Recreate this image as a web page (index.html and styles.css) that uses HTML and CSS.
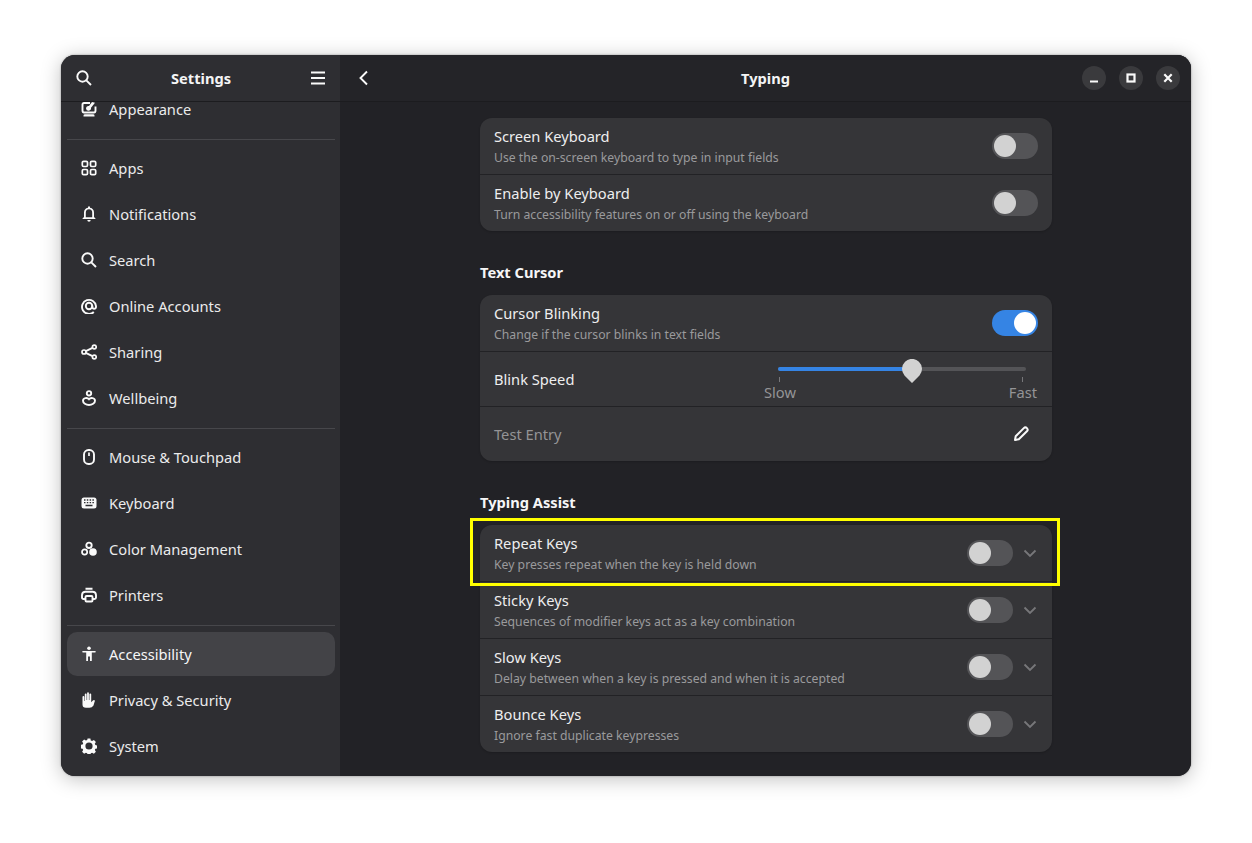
FILE: index.html
```html
<!DOCTYPE html>
<html lang="en">
<head>
<meta charset="utf-8">
<title>Settings - Typing</title>
<link rel="stylesheet" href="styles.css">
</head>
<body>
<div class="window">
  <aside class="sidebar">
    <header class="bar side-bar">
      <svg class="icon" viewBox="0 0 16 16"><circle class="st" cx="6.500" cy="6.500" r="5.200"/><path class="st" d="M10.300 10.300 15 15"/></svg>
      <span class="bar-title">Settings</span>
      <svg class="icon" viewBox="0 0 16 16"><path class="st" d="M1 2.500h14M1 8h14M1 13.500h14"/></svg>
    </header>
    <nav class="nav">
      <div class="nav-inner">
        <a class="item"><svg class="icon" viewBox="0 0 16 16"><path class="st" d="M9 2H3Q1.500 2 1.500 3.500v6Q1.500 11.500 3 11.500h10q1.500 0 1.500-2V5.500"/><path class="fl" d="M5 7.500a2.500 2.500 0 0 1 3-2.500l3-4 3 .8-4 5a2.500 2.500 0 0 1-5 .7zM4 13.300h8q1.500 0 1.500 1.200v1h-11v-1q0-1.200 1.500-1.200z"/></svg><span>Appearance</span></a>
        <hr class="sep">
        <a class="item"><svg class="icon" viewBox="0 0 16 16"><g class="st th"><rect x="1.300" y="1.300" width="5.200" height="5.200" rx="1.300"/><rect x="9.500" y="1.300" width="5.200" height="5.200" rx="1.300"/><rect x="1.300" y="9.500" width="5.200" height="5.200" rx="1.300"/><rect x="9.500" y="9.500" width="5.200" height="5.200" rx="1.300"/></g></svg><span>Apps</span></a>
        <a class="item"><svg class="icon" viewBox="0 0 16 16"><path class="fl" fill-rule="evenodd" d="M7 .5h2v1.300A5 5 0 0 1 13 6.700V11l1.500 1.500V13h-13v-.5L3 11V6.700A5 5 0 0 1 7 1.800zM8 3.300A3.300 3.300 0 0 0 4.800 6.700V11.300h6.400V6.700A3.300 3.300 0 0 0 8 3.300zM6.300 14h3.400a1.700 1.700 0 0 1-3.400 0z"/></svg><span>Notifications</span></a>
        <a class="item"><svg class="icon" viewBox="0 0 16 16"><circle class="st" cx="6.500" cy="6.500" r="5.200"/><path class="st" d="M10.300 10.300 15 15"/></svg><span>Search</span></a>
        <a class="item"><svg class="icon" viewBox="0 0 16 16"><path class="st" d="M12.800 14A7 7 0 1 1 15 8.200v.8a1.800 1.800 0 0 1-3.600 0V7.800"/><circle class="st" cx="8" cy="8" r="3.200"/></svg><span>Online Accounts</span></a>
        <a class="item"><svg class="icon" viewBox="0 0 16 16"><circle class="st th" cx="3" cy="8" r="2"/><circle class="st th" cx="13.300" cy="3" r="1.900"/><circle class="st th" cx="13.300" cy="13" r="1.900"/><path class="st" d="M4.800 7.100 11.500 3.900M4.800 8.900l6.700 3.200"/></svg><span>Sharing</span></a>
        <a class="item"><svg class="icon" viewBox="0 0 16 16"><circle class="st" cx="8" cy="3.300" r="2.200"/><path class="st" d="M8 9.200C6.500 7.400 2 7.500 2 10.700 2 13.300 5 15 8 15s6-1.700 6-4.300c0-3.200-4.500-3.300-6-1.500z"/></svg><span>Wellbeing</span></a>
        <hr class="sep">
        <a class="item"><svg class="icon" viewBox="0 0 16 16"><rect class="st" x="3" y="1" width="10" height="14" rx="4.500"/><path class="st th" d="M8 3.500v3.500"/></svg><span>Mouse &amp; Touchpad</span></a>
        <a class="item"><svg class="icon" viewBox="0 0 16 16"><rect class="fl" x="0.500" y="2.500" width="15" height="11" rx="2.500"/><path class="dk" d="M3 5h1.500M5.800 5h1.500M8.600 5h1.500M11.400 5h1.500M3 7.700h1.500M5.800 7.700h1.500M8.600 7.700h1.500M11.400 7.700h1.500M4.500 10.500h7"/></svg><span>Keyboard</span></a>
        <a class="item"><svg class="icon" viewBox="0 0 16 16"><circle class="st" cx="8" cy="4.300" r="2.700"/><circle class="st th" cx="3.600" cy="11" r="2.600"/><circle class="fl" cx="12" cy="11" r="3.800"/></svg><span>Color Management</span></a>
        <a class="item"><svg class="icon" viewBox="0 0 16 16"><path class="st" d="M4.500 4.800h7a3.500 3.500 0 0 1 3.500 3.200v2.500q0 1.500-1.500 1.500H12M4 12H2.500Q1 12 1 10.500V8a3.500 3.500 0 0 1 3.500-3.200"/><rect class="st" x="4.500" y="9" width="7" height="5.500" rx="1"/><path class="st" d="M4.500 1.800h7"/></svg><span>Printers</span></a>
        <hr class="sep">
        <a class="item active"><svg class="icon" viewBox="0 0 16 16"><circle class="fl" cx="8" cy="2.200" r="1.800"/><path class="fl" d="M2 5h12q.8 0 .8.800t-.8.800h-3.200V15H9V10.500H7V15H5.200V6.600H2q-.8 0-.8-.8T2 5z"/></svg><span>Accessibility</span></a>
        <a class="item"><svg class="icon" viewBox="0 0 16 16"><path class="fl" d="M1.500 5q0-.9.900-.9t.9.900v4h.5V2.300q0-.9.900-.9t.9.900V8h.5V1.200q0-.9.900-.9t.9.900V8h.5V2.300q0-.9.900-.9t.9.900V10.300l1.700-1.900q.9-.8 1.700-.2.700.6 0 1.500L12.500 13.500Q11 15.700 8.500 15.700H5Q1.500 15.700 1.500 12.500z"/></svg><span>Privacy &amp; Security</span></a>
        <a class="item"><svg class="icon" viewBox="0 0 16 16"><path class="fl" fill-rule="evenodd" d="M6.600.5h2.800l.4 2 1.300.6 1.800-1.100 2 2-1.100 1.800.6 1.300 2.100.4v2.800l-2.100.4-.6 1.300 1.100 1.800-2 2-1.800-1.100-1.300.6-.4 2.100H6.600l-.4-2.100-1.300-.6-1.800 1.100-2-2 1.100-1.800-.6-1.300-2.100-.4V6.900l2.100-.4.600-1.300L1.100 3.400l2-2 1.800 1.100 1.300-.6zM8 4.400a3.600 3.600 0 1 0 0 7.200A3.600 3.600 0 0 0 8 4.400z"/></svg><span>System</span></a>
      </div>
    </nav>
  </aside>
  <main class="main">
    <header class="bar main-bar">
      <div class="bar-start"><svg class="icon" viewBox="0 0 16 16"><path class="st" d="M11 1.500 4.500 8l6.500 6.500"/></svg></div>
      <span class="bar-title">Typing</span>
      <div class="bar-end">
        <span class="wbtn"><svg class="wicon" viewBox="0 0 10 10"><path class="st" d="M1 8.500h8"/></svg></span>
        <span class="wbtn"><svg class="wicon" viewBox="0 0 10 10"><rect class="st" x="1.500" y="1.500" width="7" height="7"/></svg></span>
        <span class="wbtn"><svg class="wicon" viewBox="0 0 10 10"><path class="st" d="m1.300 1.300 7.400 7.400M8.700 1.300 1.300 8.700"/></svg></span>
      </div>
    </header>
    <div class="content">
      <section class="card">
        <div class="row"><div class="text"><div class="title">Screen Keyboard</div><div class="sub">Use the on-screen keyboard to type in input fields</div></div><span class="switch"></span></div>
        <div class="row"><div class="text"><div class="title">Enable by Keyboard</div><div class="sub">Turn accessibility features on or off using the keyboard</div></div><span class="switch"></span></div>
      </section>
      <h2 class="heading">Text Cursor</h2>
      <section class="card">
        <div class="row"><div class="text"><div class="title">Cursor Blinking</div><div class="sub">Change if the cursor blinks in text fields</div></div><span class="switch on"></span></div>
        <div class="row scale-row"><div class="title">Blink Speed</div>
          <div class="scale">
            <div class="trough"><div class="fill"></div><span class="handle"><svg viewBox="0 0 20 24"><path d="M10 24 2.500 16.500A10 10 0 1 1 17.500 16.500z"/></svg></span></div>
            <div class="marks">
              <div class="mark"><i></i><span>Slow</span></div>
              <div class="mark"><i></i><span>Fast</span></div>
            </div>
          </div>
        </div>
        <div class="row entry-row"><div class="entry-label">Test Entry</div><svg class="icon" viewBox="0 0 16 16"><path class="st th2" d="M2 14l.7-3.800L10.800 2.100a2 2 0 0 1 3.100 3.100L5.800 13.300z"/></svg></div>
      </section>
      <h2 class="heading">Typing Assist</h2>
      <section class="card">
        <div class="row highlight"><div class="text"><div class="title">Repeat Keys</div><div class="sub">Key presses repeat when the key is held down</div></div><span class="switch"></span><svg class="chev" viewBox="0 0 16 16"><path d="M2.500 5.500 8 11l5.500-5.500"/></svg></div>
        <div class="row"><div class="text"><div class="title">Sticky Keys</div><div class="sub">Sequences of modifier keys act as a key combination</div></div><span class="switch"></span><svg class="chev" viewBox="0 0 16 16"><path d="M2.500 5.500 8 11l5.500-5.500"/></svg></div>
        <div class="row"><div class="text"><div class="title">Slow Keys</div><div class="sub">Delay between when a key is pressed and when it is accepted</div></div><span class="switch"></span><svg class="chev" viewBox="0 0 16 16"><path d="M2.500 5.500 8 11l5.500-5.500"/></svg></div>
        <div class="row"><div class="text"><div class="title">Bounce Keys</div><div class="sub">Ignore fast duplicate keypresses</div></div><span class="switch"></span><svg class="chev" viewBox="0 0 16 16"><path d="M2.500 5.500 8 11l5.500-5.500"/></svg></div>
      </section>
    </div>
  </main>
</div>
</body>
</html>
```
FILE: styles.css
```css
* { box-sizing: border-box; }
html, body { margin: 0; height: 100%; overflow: hidden; }
body {
  background: #fff;
  padding: 55px 61px;
  font-family: "Noto Sans", sans-serif;
  font-size: 14.67px;
  color: #f2f2f3;
}
.window {
  display: flex;
  width: 1130px;
  height: 721px;
  border-radius: 14px;
  overflow: hidden;
  box-shadow: 0 3px 20px rgba(0, 0, 0, .25), 0 0 2px rgba(0, 0, 0, .4);
  background: #222226;
}
.sidebar {
  width: 279px;
  flex: none;
  display: flex;
  flex-direction: column;
  background: #2e2e32;
}
.main {
  flex: 1;
  min-width: 0;
  display: flex;
  flex-direction: column;
  background: #222226;
}
.bar {
  height: 47px;
  flex: none;
  border-bottom: 1px solid #1c1c1f;
  display: grid;
  grid-template-columns: 1fr auto 1fr;
  align-items: center;
}
.side-bar { padding: 0 14px 0 15px; }
.side-bar .icon:last-child { justify-self: end; }
.main-bar { background: #242428; padding: 0 11px; }
.bar-title { font-weight: 700; color: #f4f4f5; line-height: 20px; }
.bar-end { display: flex; justify-content: flex-end; gap: 13px; }
.bar-start { display: flex; padding-left: 5px; }
.icon { width: 16px; height: 16px; flex: none; display: block; }
.st { fill: none; stroke: #fafafa; stroke-width: 1.9; }
.st.th { stroke-width: 1.7; }
.st.th2 { stroke-width: 2; stroke-linejoin: round; }
.fl { fill: #fafafa; }
.dk { fill: none; stroke: #2e2e32; stroke-width: 1.3; }
.wbtn {
  width: 24px;
  height: 24px;
  border-radius: 50%;
  background: #3a3a3d;
  display: flex;
  align-items: center;
  justify-content: center;
}
.wicon { width: 10px; height: 10px; display: block; }
.wicon .st { stroke-width: 2.2; }
.nav { flex: 1; min-height: 0; overflow: hidden; }
.nav-inner {
  margin-top: -15px;
  padding: 0 5px 0 6px;
  display: flex;
  flex-direction: column;
  gap: 2px;
}
.item {
  height: 44px;
  flex: none;
  display: flex;
  align-items: center;
  gap: 12px;
  padding: 0 14px;
  border-radius: 10px;
  color: #ebebec;
}
.item.active { background: #434347; color: #f6f6f7; }
.sep {
  height: 1px;
  border: 0;
  margin: 6px 0 4px;
  background: #47474b;
  flex: none;
}
.content {
  flex: 1;
  min-height: 0;
  overflow: hidden;
  padding: 16px 139px 0 140px;
}
.card {
  background: #353538;
  border-radius: 12px;
  box-shadow: 0 1px 2px rgba(0, 0, 0, .18);
}
.heading {
  margin: 31px 0 13px;
  font-size: 14.67px;
  font-weight: 700;
  line-height: 20px;
  color: #f6f6f7;
}
.row {
  position: relative;
  height: 57px;
  display: flex;
  align-items: center;
  padding: 0 14px;
  border-bottom: 1px solid #222225;
}
.row:last-child { border-bottom: 0; height: 56px; }
.scale-row { height: 55px; }
.card .entry-row { height: 54px; }
.text { flex: 1; min-width: 0; padding-top: 2px; }
.title { line-height: 20px; color: #eeeeef; }
.sub { font-size: 12.22px; line-height: 22px; margin-top: 1px; color: #9a9a9c; }
.switch {
  position: relative;
  flex: none;
  width: 46px;
  height: 26px;
  border-radius: 13px;
  background: #545457;
}
.switch::after {
  content: "";
  position: absolute;
  left: 2px;
  top: 2px;
  width: 22px;
  height: 22px;
  border-radius: 50%;
  background: #d2d2d2;
}
.switch.on { background: #3584e4; }
.switch.on::after { left: 22px; background: #fff; }
.chev { width: 16px; height: 16px; flex: none; margin: 0 0 0 9px; }
.chev path { fill: none; stroke: #77777a; stroke-width: 1.8; }
.scale-row { justify-content: space-between; padding-right: 15px; }
.scale { width: 273px; padding-top: 10px; }
.trough {
  position: relative;
  height: 4px;
  margin: 0 11px 0 14px;
  border-radius: 2px;
  background: #545457;
}
.fill { width: 54%; height: 4px; border-radius: 2px; background: #3584e4; }
.handle {
  position: absolute;
  left: 124px;
  top: -8px;
  width: 20px;
  height: 24px;
}
.handle svg { display: block; width: 20px; height: 24px; }
.handle path { fill: #d2d2d2; }
.marks { display: flex; justify-content: space-between; margin-top: 6px; }
.mark { display: flex; flex-direction: column; align-items: center; }
.mark i { display: block; width: 1px; height: 5px; background: #77777a; }
.mark span { line-height: 18px; margin-top: 1px; color: #949496; }
.entry-row { justify-content: space-between; padding-right: 23px; }
.entry-label { color: #949496; }
.highlight::after {
  content: "";
  position: absolute;
  inset: -7px -8px -5px -10px;
  border: 3px solid #ffff00;
  pointer-events: none;
}
```
